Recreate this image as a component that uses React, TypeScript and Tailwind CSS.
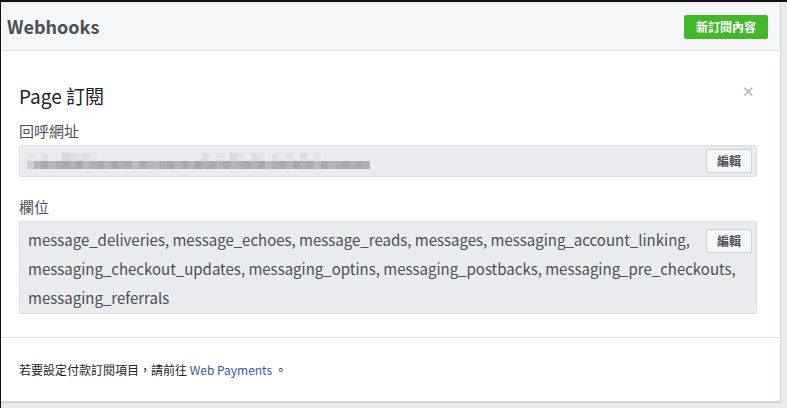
import React from "react";

const topRow = [
  "bg-[#e4e5e8]","bg-[#e9ebee]","bg-[#dfe0e3]","bg-[#e9ebee]","bg-[#e9ebee]","bg-[#d8d9dc]","bg-[#dcdde0]","bg-[#e2e3e6]","bg-[#dfe0e3]","bg-[#e5e6e9]",
  "bg-[#e9ebee]","bg-[#e9ebee]","bg-[#e9ebee]","bg-[#e9ebee]","bg-[#e9ebee]","bg-[#e9ebee]","bg-[#e9ebee]","bg-[#e9ebee]","bg-[#e9ebee]","bg-[#e9ebee]",
  "bg-[#e9ebee]","bg-[#e9ebee]","bg-[#e9ebee]","bg-[#e9ebee]","bg-[#e9ebee]","bg-[#dcdde0]","bg-[#e9ebee]","bg-[#e2e3e6]","bg-[#e9ebee]","bg-[#d8d9dc]",
  "bg-[#e2e3e6]","bg-[#e9ebee]","bg-[#dcdde0]","bg-[#e2e3e6]","bg-[#e9ebee]","bg-[#dfe0e3]","bg-[#e9ebee]","bg-[#e2e3e6]","bg-[#e9ebee]","bg-[#dcdde0]",
  "bg-[#e9ebee]","bg-[#e2e3e6]","bg-[#e9ebee]","bg-[#e9ebee]","bg-[#e9ebee]","bg-[#e9ebee]","bg-[#e9ebee]","bg-[#e9ebee]","bg-[#e9ebee]",
];
const bottomRow = [
  "bg-[#cfcfd0]","bg-[#b4b5b9]","bg-[#a9abb0]","bg-[#b5b7bc]","bg-[#aeb0b5]","bg-[#a8aaaf]","bg-[#b2b4b9]","bg-[#a7a8ad]","bg-[#b7b9be]","bg-[#aeb0b5]",
  "bg-[#a9abb0]","bg-[#b4b6bb]","bg-[#a6a8ad]","bg-[#b0b2b7]","bg-[#aaacb1]","bg-[#b9bbc0]","bg-[#a9abb0]","bg-[#b3b5ba]","bg-[#b6b8bf]","bg-[#aeb0b5]",
  "bg-[#a8aaaf]","bg-[#b2b4b9]","bg-[#a9abb0]","bg-[#b4b6bb]","bg-[#a6a8ad]","bg-[#b0b2b7]","bg-[#aaacb1]","bg-[#b3b5ba]","bg-[#a9abb0]","bg-[#b4b6bb]",
  "bg-[#aeb0b5]","bg-[#a8aaaf]","bg-[#b2b4b9]","bg-[#a7a8ad]","bg-[#b7b9be]","bg-[#aeb0b5]","bg-[#a9abb0]","bg-[#b4b6bb]","bg-[#a6a8ad]","bg-[#b0b2b7]",
  "bg-[#aaacb1]","bg-[#b9bbc0]","bg-[#a9abb0]","bg-[#b3b5ba]","bg-[#aeb0b5]","bg-[#a8aaaf]","bg-[#b2b4b9]","bg-[#a9abb0]","bg-[#aeb0b5]",
];

function EditButton({ className = "" }: { className?: string }) {
  return (
    <button
      className={`h-[24px] w-[46px] shrink-0 rounded-[2px] border border-[#ccd0d5] bg-[#f6f7f9] text-[12px] font-bold text-[#4b4f56] leading-none ${className}`}
    >
      編輯
    </button>
  );
}

export default function App() {
  return (
    <div
      className="w-[787px] h-[408px] bg-[#e9ebee] border-t-2 border-l border-t-[#111] border-l-[#111] pt-[1px] overflow-hidden"
      style={{ fontFamily: '"Noto Sans CJK TC", "Noto Sans", sans-serif' }}
    >
      <div className="w-[780px] h-[399px] bg-white border-r border-b border-[#d3d6db] flex flex-col shadow-[0_1px_1px_rgba(0,0,0,0.1)]">
        <div className="h-[48px] shrink-0 bg-[#f5f6f7] border-b border-[#dddfe2] flex items-center justify-between pl-[6px] pr-[12px]">
          <div className="text-[18px] font-bold text-[#4b4f56] leading-none -mt-[1px]">Webhooks</div>
          <button className="h-[24px] px-[11px] rounded-[2px] bg-[#42b72a] border border-[#42b72a] text-white text-[12px] font-bold leading-none">
            新訂閱內容
          </button>
        </div>

        <div className="flex-1 pl-[18px] pr-[23px] pt-[31px] border-b border-[#dddfe2]">
          <div className="flex items-start justify-between">
            <div className="text-[19px] text-[#1d2129] leading-[28px]">Page 訂閱</div>
            <div className="text-[#a9b3c4] text-[15px] leading-none mr-[2px] mt-[1px]">✕</div>
          </div>

          <div className="mt-[11px] text-[15px] text-[#4b4f56] leading-[20px]">回呼網址</div>
          <div className="mt-[4px] h-[32px] rounded-[2px] border border-[#dddfe2] bg-[#e9ebee] flex items-center justify-between pl-[7px] pr-[4px]">
            <div className="flex flex-col">
              <div className="flex">
                {topRow.map((c, i) => (
                  <div key={i} className={`w-[7px] h-[8px] ${c}`} />
                ))}
              </div>
              <div className="flex">
                {bottomRow.map((c, i) => (
                  <div key={i} className={`w-[7px] h-[8px] ${c}`} />
                ))}
              </div>
            </div>
            <EditButton />
          </div>

          <div className="mt-[20px] text-[15px] text-[#4b4f56] leading-[20px]">欄位</div>
          <div className="mt-[4px] rounded-[2px] border border-[#dddfe2] bg-[#e9ebee] pl-[8px] pr-[4px] pt-[3px] pb-[1px]">
            <EditButton className="float-right mt-[4px] ml-[8px]" />
            <div className="text-[15px] text-[#4b4f56] leading-[29px]">
              message_deliveries, message_echoes, message_reads, messages, messaging_account_linking, messaging_checkout_updates, messaging_optins, messaging_postbacks, messaging_pre_checkouts, messaging_referrals
            </div>
          </div>
        </div>

        <div className="h-[63px] shrink-0 pl-[18px] flex items-center text-[12px] text-[#1d2129]">
          <span>若要設定付款訂閱項目，請前往 <span className="text-[#365899]">Web Payments</span> 。</span>
        </div>
      </div>
    </div>
  );
}
